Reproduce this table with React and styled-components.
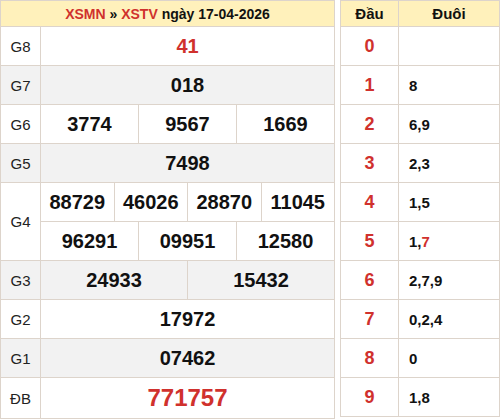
import React from "react";
import styled, { createGlobalStyle } from "styled-components";

const Global = createGlobalStyle`
  html, body { margin: 0; padding: 0; background: #fff; }
  body { font-family: "Liberation Sans", Arial, sans-serif; color: #111; }
`;

const BORDER = "#ddd4cb";
const RED = "#d0312d";
const HEAD = "#fff1bb";

const Page = styled.div`
  display: flex;
  align-items: flex-start;
  gap: 5px;
  width: 500px;
`;

const Panel = styled.div`
  display: flex;
  flex-direction: column;
  border-left: 1px solid ${BORDER};
  border-top: 1px solid ${BORDER};
  width: ${(p) => p.$w}px;
  box-sizing: border-box;
`;

const Header = styled.div`
  height: 26px;
  display: grid;
  grid-template-columns: ${(p) => p.$cols || "1fr"};
  background: ${HEAD};
`;

const HeadCell = styled.div`
  display: flex;
  align-items: center;
  justify-content: center;
  border-right: 1px solid ${BORDER};
  border-bottom: 1px solid ${BORDER};
  font-size: ${(p) => p.$size || 14}px;
  font-weight: bold;
  color: #111;
`;

const Red = styled.span`
  color: ${RED};
`;

const Row = styled.div`
  display: grid;
  grid-template-columns: 40px 1fr;
  background: ${(p) => (p.$alt ? "#f2f2f2" : "#fff")};
`;

const Label = styled.div`
  display: flex;
  align-items: center;
  justify-content: center;
  border-right: 1px solid ${BORDER};
  border-bottom: 1px solid ${BORDER};
  font-size: 15px;
  color: #222;
`;

const Cells = styled.div`
  display: flex;
  flex-direction: column;
`;

const Line = styled.div`
  display: grid;
  grid-template-columns: repeat(${(p) => p.$n}, 1fr);
`;

const Num = styled.div`
  height: ${(p) => (p.$big ? 40 : 38)}px;
  display: flex;
  align-items: center;
  justify-content: center;
  border-right: 1px solid ${BORDER};
  border-bottom: 1px solid ${BORDER};
  font-size: ${(p) => (p.$big ? 24 : 20)}px;
  font-weight: bold;
  color: ${(p) => (p.$red ? RED : "#111")};
`;

const LotoRow = styled.div`
  display: grid;
  grid-template-columns: 58px 1fr;
  height: 39px;
`;

const Head = styled.div`
  display: flex;
  align-items: center;
  justify-content: center;
  border-right: 1px solid ${BORDER};
  border-bottom: 1px solid ${BORDER};
  font-size: 18px;
  font-weight: bold;
  color: ${RED};
`;

const Tail = styled.div`
  display: flex;
  align-items: center;
  padding-left: 10px;
  border-right: 1px solid ${BORDER};
  border-bottom: 1px solid ${BORDER};
  font-size: 15px;
  font-weight: bold;
  color: #111;
`;

const prizes = [
  { label: "G8", lines: [["41"]], red: true },
  { label: "G7", lines: [["018"]] },
  { label: "G6", lines: [["3774", "9567", "1669"]] },
  { label: "G5", lines: [["7498"]] },
  { label: "G4", lines: [["88729", "46026", "28870", "11045"], ["96291", "09951", "12580"]] },
  { label: "G3", lines: [["24933", "15432"]] },
  { label: "G2", lines: [["17972"]] },
  { label: "G1", lines: [["07462"]] },
  { label: "ĐB", lines: [["771757"]], red: true, big: true },
];

const loto = [
  [],
  ["8"],
  ["6", "9"],
  ["2", "3"],
  ["1", "5"],
  ["1", "7*"],
  ["2", "7", "9"],
  ["0", "2", "4"],
  ["0"],
  ["1", "8"],
];

export default function App() {
  return (
    <>
      <Global />
      <Page>
        <Panel $w={335}>
          <Header>
            <HeadCell>
              <Red>XSMN</Red>&nbsp;»&nbsp;<Red>XSTV</Red>&nbsp;ngày 17-04-2026
            </HeadCell>
          </Header>
          {prizes.map((p, i) => (
            <Row key={p.label} $alt={i % 2 === 1}>
              <Label>{p.label}</Label>
              <Cells>
                {p.lines.map((line, j) => (
                  <Line key={j} $n={line.length}>
                    {line.map((n) => (
                      <Num key={n} $red={p.red} $big={p.big}>
                        {n}
                      </Num>
                    ))}
                  </Line>
                ))}
              </Cells>
            </Row>
          ))}
        </Panel>
        <Panel $w={160}>
          <Header $cols="58px 1fr">
            <HeadCell $size={15}>Đầu</HeadCell>
            <HeadCell $size={15}>Đuôi</HeadCell>
          </Header>
          {loto.map((tails, d) => (
            <LotoRow key={d}>
              <Head>{d}</Head>
              <Tail>
                {tails.map((t, k) => (
                  <React.Fragment key={k}>
                    {k > 0 && ","}
                    {t.endsWith("*") ? <Red>{t[0]}</Red> : t}
                  </React.Fragment>
                ))}
              </Tail>
            </LotoRow>
          ))}
        </Panel>
      </Page>
    </>
  );
}
